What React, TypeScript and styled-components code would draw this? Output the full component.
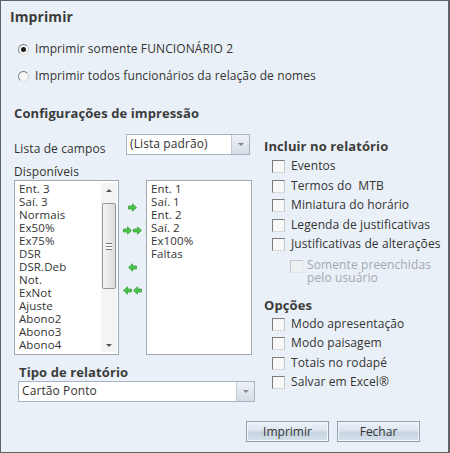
import React from "react";
import styled, { createGlobalStyle } from "styled-components";

const GlobalStyle = createGlobalStyle`
  html, body {
    margin: 0;
    padding: 0;
    background: #eaf0f7;
  }
  body {
    font-family: "Open Sans", "Noto Sans", "DejaVu Sans", sans-serif;
    font-size: 12px;
    letter-spacing: 0.1px;
    color: #333;
  }
`;

const Dialog = styled.div`
  box-sizing: border-box;
  width: 450px;
  height: 453px;
  border: 1px solid #5f6266;
  border-right-width: 2px;
  background: #eaf0f7;
  padding: 0 0 0 9px;
  display: flex;
  flex-direction: column;
`;

const Title = styled.div`
  font-weight: bold;
  font-size: 14px;
  line-height: 18px;
  color: #3c3c3c;
  margin-top: 7px;
`;

const RadioGroup = styled.div`
  display: flex;
  flex-direction: column;
  gap: 11px;
  margin: 15px 0 0 8px;
`;

const RadioRow = styled.label`
  display: flex;
  align-items: center;
  gap: 6px;
  height: 16px;
  line-height: 16px;
`;

const RadioDot = styled.span<{ checked?: boolean }>`
  box-sizing: border-box;
  width: 11px;
  height: 11px;
  border-radius: 50%;
  border: 1px solid #9a9a9a;
  border-color: #777 #d0d0d0 #e0e0e0 #888;
  background: #f6f6f6;
  display: flex;
  align-items: center;
  justify-content: center;
  &::after {
    content: "";
    width: 5px;
    height: 5px;
    border-radius: 50%;
    background: ${(p) => (p.checked ? "#1f1f1f" : "transparent")};
  }
`;

const SectionTitle = styled.div<{ top?: number; indent?: number }>`
  font-weight: bold;
  font-size: 13px;
  line-height: 16px;
  color: #3c3c3c;
  margin-top: ${(p) => p.top ?? 0}px;
  padding-left: ${(p) => p.indent ?? 0}px;
`;

const Body = styled.div`
  display: flex;
  margin-top: 13px;
`;

const LeftCol = styled.div`
  width: 240px;
  padding-left: 4px;
  display: flex;
  flex-direction: column;
`;

const RightCol = styled.div`
  margin-left: 10px;
  padding-top: 4px;
  display: flex;
  flex-direction: column;
`;

const FieldRow = styled.div`
  display: flex;
  align-items: center;
  height: 21px;
`;

const FieldLabel = styled.span`
  width: 112px;
  padding-top: 7px;
`;

const Select = styled.div<{ w: number }>`
  box-sizing: border-box;
  width: ${(p) => p.w}px;
  height: 21px;
  border: 1px solid #a7b4c2;
  background: #fff;
  display: flex;
  align-items: stretch;
`;

const SelectText = styled.span`
  flex: 1;
  padding-left: 3px;
  line-height: 18px;
  font-size: 12px;
  color: #333;
`;

const SelectButton = styled.span`
  width: 17px;
  border-left: 1px solid #c3ccd6;
  background: linear-gradient(#eef2f6, #d4dce5);
  display: flex;
  align-items: center;
  justify-content: center;
  &::after {
    content: "";
    border-left: 3px solid transparent;
    border-right: 3px solid transparent;
    border-top: 3px solid #7d8893;
  }
`;

const SmallLabel = styled.div`
  margin-top: 9px;
  line-height: 16px;
`;

const FieldBlock = styled.div`
  padding-left: 4px;
  margin-top: 1px;
`;

const ListsRow = styled.div`
  display: flex;
`;

const ListBox = styled.div<{ w: number }>`
  box-sizing: border-box;
  width: ${(p) => p.w}px;
  height: 175px;
  border: 1px solid #a0a8b0;
  background: #fff;
  display: flex;
  overflow: hidden;
`;

const Items = styled.div`
  flex: 1;
  padding: 1px 0 0 4px;
  line-height: 13px;
  font-size: 11.5px;
  color: #333;
`;

const Scrollbar = styled.div`
  width: 16px;
  margin: 2px 1px 2px 0;
  display: flex;
  flex-direction: column;
  background: #f4f4f4;
`;

const ScrollArrow = styled.div<{ up?: boolean }>`
  height: 14px;
  display: flex;
  align-items: center;
  justify-content: center;
  &::after {
    content: "";
    border-left: 3px solid transparent;
    border-right: 3px solid transparent;
    ${(p) => (p.up ? "border-bottom" : "border-top")}: 3px solid #555;
  }
`;

const Track = styled.div`
  flex: 1;
  display: flex;
  flex-direction: column;
  padding-top: 6px;
`;

const Thumb = styled.div`
  box-sizing: border-box;
  height: 86px;
  margin: 0 1px;
  border: 1px solid #9a9a9a;
  border-radius: 2px;
  background: linear-gradient(90deg, #f4f4f4, #dcdcdc);
  display: flex;
  align-items: center;
  justify-content: center;
  &::after {
    content: "";
    width: 6px;
    height: 5px;
    border-top: 1px solid #777;
    border-bottom: 1px solid #777;
    background: linear-gradient(#fff 40%, #777 40%, #777 60%, #fff 60%);
  }
`;

const Arrows = styled.div`
  width: 27px;
  display: flex;
  flex-direction: column;
  align-items: center;
  padding-top: 23px;
`;

const ArrowBtn = styled.div<{ gap: number }>`
  margin-top: ${(p) => p.gap}px;
  height: 9px;
  display: flex;
  gap: 1px;
`;

const Checks = styled.div<{ top: number }>`
  display: flex;
  flex-direction: column;
  gap: 3.5px;
  margin-top: ${(p) => p.top}px;
  padding-left: 8px;
`;

const CheckRow = styled.label<{ disabled?: boolean; indent?: boolean }>`
  display: flex;
  align-items: flex-start;
  gap: ${(p) => (p.indent ? 4 : 6)}px;
  line-height: 16px;
  white-space: pre;
  color: ${(p) => (p.disabled ? "#a3a9b0" : "#333")};
  margin-left: ${(p) => (p.indent ? 18 : 0)}px;
  ${(p) => (p.indent ? "line-height: 13px; margin-top: 2px;" : "")}
`;

const Box = styled.span<{ disabled?: boolean }>`
  box-sizing: border-box;
  flex: none;
  width: 13px;
  height: 13px;
  margin-top: 2px;
  border: 1px solid;
  border-color: ${(p) =>
    p.disabled ? "#c4c8cc #e2e4e6 #e2e4e6 #c4c8cc" : "#7c7c7c #c8c8c8 #d8d8d8 #7c7c7c"};
  background: ${(p) => (p.disabled ? "#eef0f2" : "#f8f8f8")};
`;

const Footer = styled.div`
  display: flex;
  justify-content: flex-end;
  gap: 8px;
  padding-right: 28px;
  margin-top: 19px;
`;

const Button = styled.button`
  box-sizing: border-box;
  width: 83px;
  height: 21px;
  border: 1px solid #8fa0b1;
  outline: 1px solid #f4f7fa;
  outline-offset: -2px;
  background: linear-gradient(#eef3f8 0%, #dbe5ef 45%, #c6d3e1 55%, #d6e0ea 100%);
  font-family: "Open Sans", "Noto Sans", sans-serif;
  font-size: 12px;
  color: #333;
  padding: 0;
`;

const GreenArrow: React.FC<{ left?: boolean }> = ({ left }) => (
  <svg width="9" height="9" viewBox="0 0 9 9" style={left ? { transform: "scaleX(-1)" } : undefined}>
    <path d="M0.5 3 H4.5 V0.8 L8.5 4.5 L4.5 8.2 V6 H0.5 Z" fill="#4cc34c" stroke="#2f9a2f" strokeWidth="0.7" />
  </svg>
);

const available = [
  "Ent. 3",
  "Saí. 3",
  "Normais",
  "Ex50%",
  "Ex75%",
  "DSR",
  "DSR.Deb",
  "Not.",
  "ExNot",
  "Ajuste",
  "Abono2",
  "Abono3",
  "Abono4",
];

const selected = ["Ent. 1", "Saí. 1", "Ent. 2", "Saí. 2", "Ex100%", "Faltas"];

const include = [
  "Eventos",
  "Termos do  MTB",
  "Miniatura do horário",
  "Legenda de justificativas",
  "Justificativas de alterações",
];

const options = ["Modo apresentação", "Modo paisagem", "Totais no rodapé", "Salvar em Excel®"];

export default function App() {
  return (
    <>
      <GlobalStyle />
      <Dialog>
        <Title>Imprimir</Title>
        <RadioGroup>
          <RadioRow>
            <RadioDot checked />
            Imprimir somente FUNCIONÁRIO 2
          </RadioRow>
          <RadioRow>
            <RadioDot />
            Imprimir todos funcionários da relação de nomes
          </RadioRow>
        </RadioGroup>
        <SectionTitle top={21} indent={4}>
          Configurações de impressão
        </SectionTitle>
        <Body>
          <LeftCol>
            <FieldRow>
              <FieldLabel>Lista de campos</FieldLabel>
              <Select w={124}>
                <SelectText>(Lista padrão)</SelectText>
                <SelectButton />
              </Select>
            </FieldRow>
            <SmallLabel>Disponíveis</SmallLabel>
            <ListsRow>
              <ListBox w={105}>
                <Items>
                  {available.map((a) => (
                    <div key={a}>{a}</div>
                  ))}
                </Items>
                <Scrollbar>
                  <ScrollArrow up />
                  <Track>
                    <Thumb />
                  </Track>
                  <ScrollArrow />
                </Scrollbar>
              </ListBox>
              <Arrows>
                <ArrowBtn gap={0}>
                  <GreenArrow />
                </ArrowBtn>
                <ArrowBtn gap={14}>
                  <GreenArrow />
                  <GreenArrow />
                </ArrowBtn>
                <ArrowBtn gap={28}>
                  <GreenArrow left />
                </ArrowBtn>
                <ArrowBtn gap={14}>
                  <GreenArrow left />
                  <GreenArrow left />
                </ArrowBtn>
              </Arrows>
              <ListBox w={106}>
                <Items>
                  {selected.map((a) => (
                    <div key={a}>{a}</div>
                  ))}
                </Items>
              </ListBox>
            </ListsRow>
            <SectionTitle top={9} indent={5}>
              Tipo de relatório
            </SectionTitle>
            <FieldBlock>
              <Select w={237}>
                <SelectText>Cartão Ponto</SelectText>
                <SelectButton />
              </Select>
            </FieldBlock>
          </LeftCol>
          <RightCol>
            <SectionTitle>Incluir no relatório</SectionTitle>
            <Checks top={4}>
              {include.map((c) => (
                <CheckRow key={c}>
                  <Box />
                  {c}
                </CheckRow>
              ))}
              <CheckRow disabled indent>
                <Box disabled />
                <span>
                  Somente preenchidas
                  <br />
                  pelo usuário
                </span>
              </CheckRow>
            </Checks>
            <SectionTitle top={13}>Opções</SectionTitle>
            <Checks top={3}>
              {options.map((c) => (
                <CheckRow key={c}>
                  <Box />
                  {c}
                </CheckRow>
              ))}
            </Checks>
          </RightCol>
        </Body>
        <Footer>
          <Button>Imprimir</Button>
          <Button>Fechar</Button>
        </Footer>
      </Dialog>
    </>
  );
}
